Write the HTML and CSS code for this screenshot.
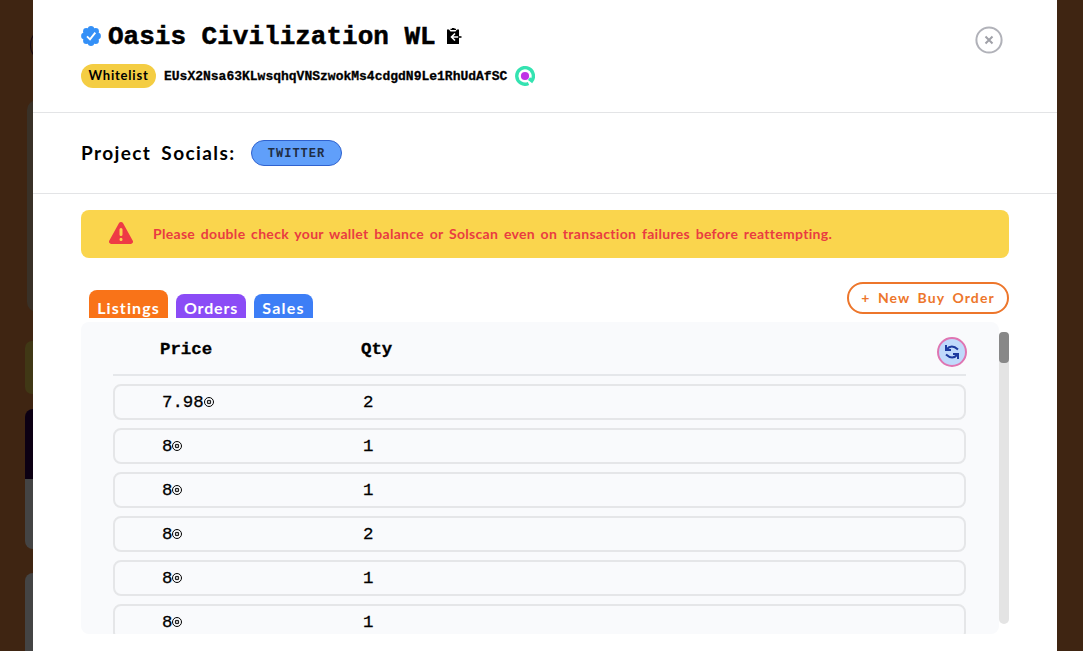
FILE: index.html
```
<!DOCTYPE html>
<html lang="en">

	<head>
		<meta charset="UTF-8">
		<meta name="viewport" content="width=device-width, initial-scale=1.0">
		<title>Oasis Civilization WL</title>
		<link rel="stylesheet" href="styles.css">
	</head>

	<body>
		<!-- page behind the modal -->
		<div class="backdrop">
			<div class="shade logo"></div>
			<div class="shade hero"></div>
			<div class="shade notice"></div>
			<div class="shade card"></div>
			<div class="shade card-next"></div>
		</div>

		<main class="modal">
			<header class="modal-head">
				<div class="head-info">
					<div class="title-row">
						<svg class="verified" viewBox="0 0 20 20">
							<g fill="#3490f7">
								<circle cx="10" cy="10" r="8"/>
								<circle cx="10" cy="3.300" r="3.200"/>
								<circle cx="14.700" cy="5.300" r="3.200"/>
								<circle cx="16.700" cy="10" r="3.200"/>
								<circle cx="14.700" cy="14.700" r="3.200"/>
								<circle cx="10" cy="16.700" r="3.200"/>
								<circle cx="5.300" cy="14.700" r="3.200"/>
								<circle cx="3.300" cy="10" r="3.200"/>
								<circle cx="5.300" cy="5.300" r="3.200"/>
							</g>
							<path fill="none" stroke="#fff" stroke-width="1.900" d="M6 10.300l3 3 5.300-6.600"/>
						</svg>
						<h1>Oasis Civilization WL</h1>
						<svg class="clipboard" viewBox="0 0 16 18">
							<path d="M1 2.500h2l1.500 2h5l1.500-2h2V17H1z"/>
							<path d="M4.500 3V1.700H6V1h2.500v.7H10V3z"/>
							<path d="M13 10H5.500M9 6.500L5.500 10 9 13.500" fill="none" stroke="#fff" stroke-width="1.600"/>
							<path d="M12 9.200h3.500v1.600H12z"/>
						</svg>
					</div>
					<div class="address-row">
						<span class="badge hand">Whitelist</span>
						<span class="address">EUsX2Nsa63KLwsqhqVNSzwokMs4cdgdN9Le1RhUdAfSC</span>
						<svg class="solscan" viewBox="0 0 20 20">
							<path fill="none" stroke="#34e3b1" stroke-width="3.400" d="M13.500 17.500A8.300 8.300 0 1 1 16.800 14.800L14 12.700"/>
							<circle cx="10" cy="10" r="4.100" fill="#bf33e6"/>
						</svg>
					</div>
				</div>
				<svg class="close" viewBox="0 0 28 28">
					<circle cx="14" cy="14" r="12.600" fill="none" stroke="#b1b2b9" stroke-width="2"/>
					<path d="M10.500 10.500l7 7M17.500 10.500l-7 7" stroke="#a0a1a8" stroke-width="2"/>
				</svg>
			</header>

			<section class="socials">
				<h2 class="hand">Project Socials:</h2>
				<a class="twitter">TWITTER</a>
			</section>

			<section class="market">
				<div class="alert">
					<svg class="warning" viewBox="0 0 24 22">
						<path fill="#ee3b45" d="M9.900 1.300a2.400 2.400 0 0 1 4.200 0l9.400 17a2.300 2.300 0 0 1-2 3.700h-19a2.300 2.300 0 0 1-2-3.700z"/>
						<path stroke="#fad54d" stroke-width="3" stroke-linecap="round" d="M12 7.500v5M12 17.300v.2"/>
					</svg>
					<span class="alert-text hand">Please double check your wallet balance or Solscan even on transaction failures before reattempting.</span>
				</div>

				<div class="toolbar">
					<nav class="tabs hand">
						<span class="tab listings">Listings</span>
						<span class="tab orders">Orders</span>
						<span class="tab sales">Sales</span>
					</nav>
					<span class="new-order hand">+ New Buy Order</span>
				</div>

				<div class="panel-wrap">
					<div class="panel">
						<div class="table-head">
							<span>Price</span>
							<span>Qty</span>
							<span class="refresh">
								<svg viewBox="0 0 16 16">
									<path fill="none" stroke="#1d3a9f" stroke-width="2" d="M2 1v5h5M2.500 5.500Q7.500-.5 14 5.500M14 15v-5H9M13.500 10.500Q8.500 16.500 2 10.500"/>
								</svg>
							</span>
						</div>
						<div class="row"><span>7.98<i></i></span><span>2</span></div>
						<div class="row"><span>8<i></i></span><span>1</span></div>
						<div class="row"><span>8<i></i></span><span>1</span></div>
						<div class="row"><span>8<i></i></span><span>2</span></div>
						<div class="row"><span>8<i></i></span><span>1</span></div>
						<div class="row"><span>8<i></i></span><span>1</span></div>
					</div>
					<div class="scrollbar"><div class="thumb"></div></div>
				</div>
			</section>
		</main>
	</body>

</html>
```
FILE: styles.css
```
* {
	margin: 0;
	padding: 0;
	box-sizing: border-box;
}

body {
	height: 651px;
	overflow: hidden;
	background: #3f2512;
	font-family: "Liberation Mono", monospace;
	color: #000;
}

svg {
	display: block;
	flex: none;
}

.hand {
	font-family: "Lato", sans-serif;
	font-weight: bold;
	white-space: nowrap;
}

/* dimmed blocks behind the modal */
.shade {
	position: absolute;
	left: 25px;
	width: 20px;
}

.logo {
	left: 30px;
	top: 31px;
	height: 28px;
	border: 1px solid #180912;
	border-radius: 50%;
}

.hero {
	left: 27px;
	top: 100px;
	height: 212px;
	border-radius: 14px;
	background: #393127;
}

.notice {
	top: 341px;
	height: 53px;
	border-radius: 7px;
	background: #403815;
}

.card {
	top: 409px;
	height: 140px;
	border-radius: 8px;
	background: linear-gradient(#0c0013 70px, #444 70px);
}

.card-next {
	top: 573px;
	height: 90px;
	border-radius: 8px;
	background: #444;
}

.modal {
	position: relative;
	width: 1024px;
	height: 651px;
	margin-left: 33px;
	background: #fff;
}

.modal-head {
	display: flex;
	justify-content: space-between;
	height: 113px;
	padding: 20px 54px 0 48px;
	border-bottom: 1px solid #e3e4e6;
}

.title-row {
	display: flex;
	align-items: center;
	height: 32px;
}

.verified {
	width: 20px;
	height: 20px;
	margin-right: 7px;
}

h1 {
	font-size: 26px;
	line-height: 30px;
	padding-top: 2px;
	white-space: nowrap;
	-webkit-text-stroke: .5px #000;
}

.clipboard {
	width: 16px;
	height: 18px;
	margin-left: 10px;
}

.address-row {
	display: flex;
	align-items: center;
	margin-top: 12px;
}

.badge {
	width: 75px;
	height: 24px;
	border-radius: 12px;
	background: #f4cd43;
	font-size: 13px;
	line-height: 23px;
	letter-spacing: .8px;
	text-align: center;
}

.address {
	width: 344px;
	margin: 0 7px 0 8px;
	font-size: 13px;
	font-weight: bold;
	-webkit-text-stroke: .3px #000;
}

.solscan {
	width: 20px;
	height: 20px;
}

.close {
	width: 28px;
	height: 28px;
	margin-top: 6px;
}

.socials {
	display: flex;
	align-items: center;
	height: 81px;
	padding: 0 48px;
	border-bottom: 1px solid #e3e4e6;
}

h2 {
	width: 170px;
	padding-bottom: 2px;
	font-size: 19px;
	letter-spacing: 1.4px;
	word-spacing: 4px;
}

.twitter {
	width: 91px;
	height: 26px;
	border: 1px solid #2f62cf;
	border-radius: 13px;
	background: #609ffa;
	color: #1f2d44;
	font-size: 12px;
	font-weight: bold;
	line-height: 26px;
	letter-spacing: 1px;
	text-align: center;
}

.market {
	padding: 16px 48px 0;
}

.alert {
	display: flex;
	align-items: center;
	height: 48px;
	padding-left: 28px;
	border-radius: 8px;
	background: #fad54d;
	color: #e93c41;
}

.warning {
	width: 24px;
	height: 22px;
	margin: 0 20px 2px 0;
}

.alert-text {
	padding-bottom: 1px;
	font-size: 14px;
	letter-spacing: .3px;
	word-spacing: 2px;
}

.toolbar {
	display: flex;
	justify-content: space-between;
	height: 36px;
	margin: 24px 0 4px;
}

.tabs {
	display: flex;
	align-items: flex-end;
	gap: 8px;
	margin-left: 8px;
}

.tab {
	height: 24px;
	border-radius: 8px 8px 0 0;
	color: #fff;
	font-size: 16px;
	line-height: 27px;
	letter-spacing: .8px;
	text-align: center;
}

.listings {
	width: 79px;
	height: 28px;
	background: #f97318;
	line-height: 35px;
	letter-spacing: 1.1px;
}

.orders {
	width: 70px;
	background: #8b4cf6;
}

.sales {
	width: 59px;
	background: #3d7ef6;
	letter-spacing: 1.2px;
}

.new-order {
	width: 162px;
	height: 32px;
	border: 2px solid #ed762b;
	border-radius: 16px;
	color: #ed762b;
	font-size: 14px;
	line-height: 28px;
	letter-spacing: 1.1px;
	word-spacing: 3px;
	text-align: center;
}

.panel-wrap {
	display: flex;
	height: 312px;
}

.panel {
	width: 918px;
	overflow: hidden;
	padding: 0 33px 0 32px;
	border-radius: 8px;
	background: #f9fafc;
}

.table-head {
	display: grid;
	grid-template-columns: 201px 1fr 29px;
	align-items: center;
	height: 54px;
	margin-bottom: 8px;
	padding: 3px 0 0 47px;
	border-bottom: 2px solid #e5e7ea;
	font-size: 17.4px;
	font-weight: bold;
	-webkit-text-stroke: .3px #000;
}

.refresh {
	display: flex;
	align-items: center;
	justify-content: center;
	width: 30px;
	height: 30px;
	margin-top: 5px;
	border: 2px solid #df75b2;
	border-radius: 50%;
	background: #c0d9fb;
}

.refresh svg {
	width: 16px;
	height: 16px;
}

.row {
	display: grid;
	grid-template-columns: 201px 1fr;
	align-items: center;
	height: 36px;
	margin-bottom: 8px;
	padding-left: 47px;
	border: 2px solid #e5e6e8;
	border-radius: 8px;
	font-size: 17.4px;
	-webkit-text-stroke: .3px #000;
}

.row span {
	display: flex;
	align-items: center;
}

/* sol sign: ring with a smaller ring inside */
.row i {
	width: 10px;
	height: 10px;
	border: 1px solid #000;
	border-radius: 50%;
	background: radial-gradient(circle, #f9fafc .6px, #222 1px, #222 2px, #f9fafc 2.6px);
}

.scrollbar {
	width: 10px;
	height: 292px;
	margin-top: 10px;
	border-radius: 5px;
	background: #e4e4e4;
}

.thumb {
	height: 31px;
	border-radius: 4px;
	background: #888;
}
```
